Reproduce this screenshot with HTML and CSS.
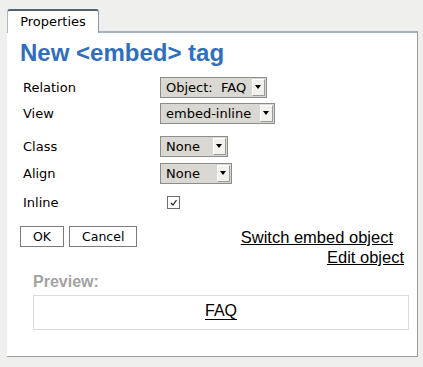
FILE: index.html
```html
<!DOCTYPE html>
<html>
<head>
<meta charset="utf-8">
<link rel="stylesheet" href="styles.css">
</head>
<body>
<div class="frame">
  <div class="tabs">
    <div class="tab">Properties</div>
  </div>
  <div class="panel">
    <h1 class="title">New &lt;embed&gt; tag</h1>
    <div class="form">
      <div class="row row-relation">
        <span class="label">Relation</span>
        <div class="select select-relation"><span class="select-text">Object:&nbsp; FAQ</span><span class="arrow"></span></div>
      </div>
      <div class="row row-view">
        <span class="label">View</span>
        <div class="select select-view"><span class="select-text">embed-inline</span><span class="arrow"></span></div>
      </div>
      <div class="row row-class">
        <span class="label">Class</span>
        <div class="select select-class"><span class="select-text">None</span><span class="arrow"></span></div>
      </div>
      <div class="row row-align">
        <span class="label">Align</span>
        <div class="select select-align"><span class="select-text">None</span><span class="arrow"></span></div>
      </div>
      <div class="row row-inline">
        <span class="label">Inline</span>
        <span class="checkbox"><svg width="11" height="11" viewBox="0 0 11 11"><path d="M3 6 L5 8 L8.5 3" fill="none" stroke="#222" stroke-width="1.2"/></svg></span>
      </div>
    </div>
    <div class="actions">
      <div class="buttons">
        <button class="btn">OK</button>
        <button class="btn">Cancel</button>
      </div>
      <div class="links">
        <a class="link link-switch" href="#">Switch embed object</a>
        <a class="link" href="#">Edit object</a>
      </div>
    </div>
    <div class="preview">
      <div class="preview-label">Preview:</div>
      <div class="preview-box"><a class="preview-link" href="#">FAQ</a></div>
    </div>
  </div>
</div>
</body>
</html>
```

FILE: styles.css
```css
html, body {
  margin: 0;
  padding: 0;
}
body {
  background: #efefed;
  font-family: "DejaVu Sans", sans-serif;
  font-size: 13px;
  color: #000;
}
.frame {
  padding: 9px 5px 10px 7px;
}
.tabs {
  display: flex;
}
.tab {
  position: relative;
  z-index: 1;
  width: 92px;
  box-sizing: border-box;
  height: 24px;
  margin-bottom: -2px;
  background: #fff;
  border-top: 2px solid #56636f;
  border-left: 1px solid #a9b8c3;
  border-right: 1px solid #8d9aa4;
  border-radius: 3px 3px 0 0;
  text-align: center;
  line-height: 15px;
  padding-top: 3px;
}
.panel {
  background: #fff;
  border-top: 2px solid #a3b3bf;
  border-right: 1px solid #9a9a9a;
  border-bottom: 1px solid #9a9a9a;
  padding-bottom: 26px;
}
.title {
  margin: 6px 0 0 0;
  padding-left: 13px;
  font-family: "Liberation Sans", Arial, sans-serif;
  font-weight: bold;
  font-size: 24px;
  line-height: 28px;
  color: #2f6fbd;
}
.form {
  padding-left: 16px;
}
.row {
  display: flex;
  align-items: center;
  height: 21px;
}
.row-relation { margin-top: 10px; }
.row-view { margin-top: 5px; }
.row-class { margin-top: 12px; }
.row-align { margin-top: 6px; }
.row-inline { margin-top: 8px; }
.label {
  width: 137px;
  line-height: 15px;
}
.select {
  display: flex;
  align-items: center;
  justify-content: space-between;
  box-sizing: border-box;
  height: 21px;
  background: #d9d8d3;
  border: 1px solid #8c8c8a;
  padding: 0 1px 0 5px;
}
.select-relation { width: 107px; }
.select-view { width: 115px; }
.select-class { width: 68px; }
.select-align { width: 72px; }
.select-text {
  white-space: nowrap;
  line-height: 15px;
}
.arrow {
  position: relative;
  box-sizing: border-box;
  width: 13px;
  height: 17px;
  background: #f2f1ed;
  border-top: 1px solid #fff;
  border-left: 1px solid #fff;
  border-right: 1px solid #9a9a98;
  border-bottom: 1px solid #9a9a98;
}
.arrow::after {
  content: "";
  position: absolute;
  left: 2px;
  top: 5px;
  border-left: 3.5px solid transparent;
  border-right: 3.5px solid transparent;
  border-top: 4px solid #000;
}
.checkbox {
  display: flex;
  box-sizing: border-box;
  width: 13px;
  height: 13px;
  margin-left: 7px;
  border: 1px solid #6e6e6e;
  background: #fff;
}
.actions {
  display: flex;
  justify-content: space-between;
  align-items: flex-start;
  margin-top: 13px;
  padding: 0 13px;
}
.buttons {
  display: flex;
  gap: 5px;
}
.btn {
  box-sizing: border-box;
  height: 21px;
  margin: 0;
  padding: 0 12px;
  background: #fff;
  border: 1px solid #7b7b7b;
  border-radius: 0;
  font-family: "DejaVu Sans", sans-serif;
  font-size: 12.5px;
  color: #000;
}
.links {
  display: flex;
  flex-direction: column;
  align-items: flex-end;
  margin-top: 1px;
}
.link {
  font-family: "Liberation Sans", Arial, sans-serif;
  font-size: 16.5px;
  line-height: 20px;
  color: #000;
  text-decoration: underline;
}
.link-switch {
  margin-right: 11px;
}
.preview {
  margin: 6px 8px 0 26px;
}
.preview-label {
  font-family: "Liberation Sans", Arial, sans-serif;
  font-weight: bold;
  font-size: 16px;
  line-height: 18px;
  color: #a3a3a3;
}
.preview-box {
  margin-top: 4px;
  border: 1px solid #dcdcdc;
  padding: 6px 0 8px;
  text-align: center;
  line-height: 18px;
}
.preview-link {
  font-family: "Liberation Sans", Arial, sans-serif;
  font-size: 16px;
  color: #000;
  text-decoration: underline;
  text-underline-offset: 3px;
}
```
